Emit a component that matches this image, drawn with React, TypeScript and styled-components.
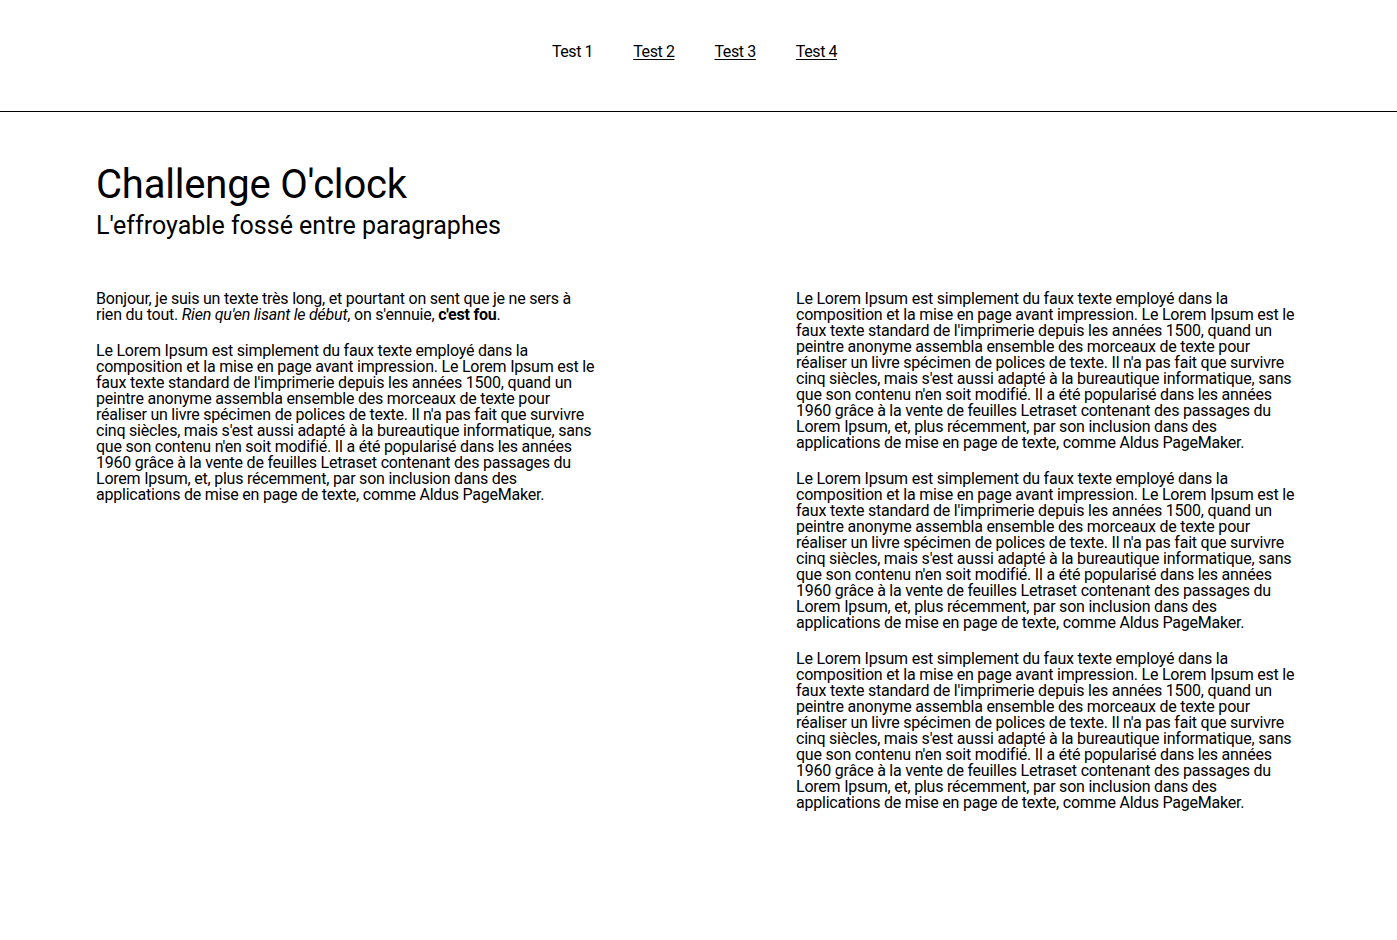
import React from 'react';
import styled, {createGlobalStyle} from 'styled-components';

const GlobalStyle = createGlobalStyle`
  html, body {
    margin: 0;
    padding: 0;
    background: #ffffff;
    color: #000000;
    font-family: Roboto, "Liberation Sans", sans-serif;
  }
`;

const lorem = "Le Lorem Ipsum est simplement du faux texte employé dans la composition et la mise en page avant impression. Le Lorem Ipsum est le faux texte standard de l'imprimerie depuis les années 1500, quand un peintre anonyme assembla ensemble des morceaux de texte pour réaliser un livre spécimen de polices de texte. Il n'a pas fait que survivre cinq siècles, mais s'est aussi adapté à la bureautique informatique, sans que son contenu n'en soit modifié. Il a été popularisé dans les années 1960 grâce à la vente de feuilles Letraset contenant des passages du Lorem Ipsum, et, plus récemment, par son inclusion dans des applications de mise en page de texte, comme Aldus PageMaker.";

const links = ['Test 1', 'Test 2', 'Test 3', 'Test 4'];

export default function App() {
  return (
    <>
      <GlobalStyle/>
      <Header>
        <Nav>
          {links.map((label, i) => (
            <NavLink key={label} href='#' current={i === 0}>{label}</NavLink>
          ))}
        </Nav>
      </Header>
      <Main>
        <Title>Challenge O'clock</Title>
        <Subtitle>L'effroyable fossé entre paragraphes</Subtitle>
        <Columns>
          <Column>
            <Paragraph>
              Bonjour, je suis un texte très long, et pourtant on sent que je ne sers à rien du tout. <em>Rien qu'en lisant le début</em>, on s'ennuie, <strong>c'est fou</strong>.
            </Paragraph>
            <Paragraph>{lorem}</Paragraph>
          </Column>
          <Column>
            <Paragraph>{lorem}</Paragraph>
            <Paragraph>{lorem}</Paragraph>
            <Paragraph>{lorem}</Paragraph>
          </Column>
        </Columns>
      </Main>
    </>
  );
}

const Header = styled.header`
  height: 111px;
  border-bottom: 1px solid #000000;
  display: flex;
  justify-content: center;
`;

const Nav = styled.nav`
  display: flex;
  gap: 40px;
  padding: 43px 8px 0 0;
`;

const NavLink = styled.a<{current: boolean}>`
  font-size: 16px;
  line-height: 18px;
  letter-spacing: -0.4px;
  color: #000000;
  text-decoration: ${(props) => props.current ? 'none' : 'underline'};
  text-underline-offset: 2px;
`;

const Main = styled.main`
  padding: 49px 0 0 96px;
`;

const Title = styled.h1`
  margin: 0;
  font-size: 40px;
  line-height: 48px;
  font-weight: 400;
  letter-spacing: -0.2px;
`;

const Subtitle = styled.h2`
  margin: 0;
  padding-top: 2px;
  font-size: 25px;
  line-height: 30px;
  font-weight: 400;
`;

const Columns = styled.div`
  display: grid;
  grid-template-columns: 501px 501px;
  column-gap: 199px;
  margin-top: 50px;
`;

const Column = styled.div`
  display: flex;
  flex-direction: column;
  gap: 20px;
`;

const Paragraph = styled.p`
  margin: 0;
  font-size: 16px;
  line-height: 16px;
  letter-spacing: -0.22px;
`;
